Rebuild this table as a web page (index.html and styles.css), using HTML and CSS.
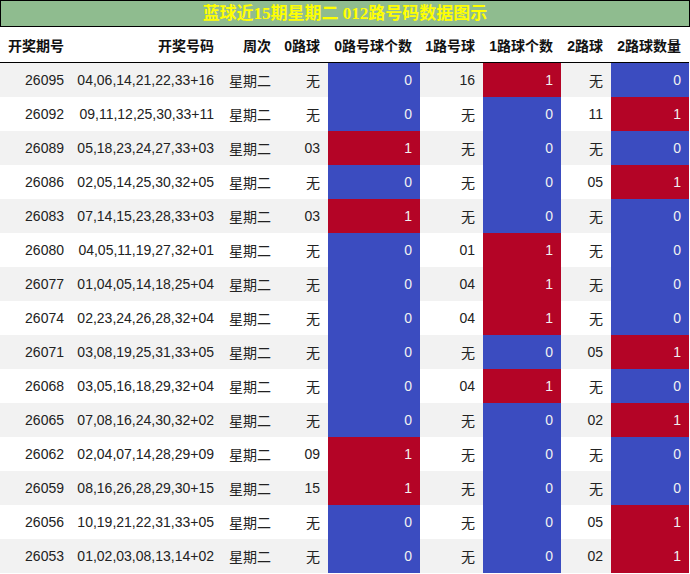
FILE: index.html
```html
<!DOCTYPE html>
<html lang="zh">
<head>
<meta charset="utf-8">
<title>蓝球近15期星期二 012路号码数据图示</title>
<link rel="stylesheet" href="styles.css">
</head>
<body>
<div class="title">蓝球近15期星期二 012路号码数据图示</div>
<table class="grid">
<colgroup>
<col class="c1"><col class="c2"><col class="c3"><col class="c4"><col class="c5"><col class="c6"><col class="c7"><col class="c8"><col class="c9">
</colgroup>
<thead>
<tr><th>开奖期号</th><th>开奖号码</th><th>周次</th><th>0路球</th><th>0路号球个数</th><th>1路号球</th><th>1路球个数</th><th>2路球</th><th>2路球数量</th></tr>
</thead>
<tbody>
<tr><td>26095</td><td>04,06,14,21,22,33+16</td><td>星期二</td><td>无</td><td class="lo">0</td><td>16</td><td class="hi">1</td><td>无</td><td class="lo">0</td></tr>
<tr><td>26092</td><td>09,11,12,25,30,33+11</td><td>星期二</td><td>无</td><td class="lo">0</td><td>无</td><td class="lo">0</td><td>11</td><td class="hi">1</td></tr>
<tr><td>26089</td><td>05,18,23,24,27,33+03</td><td>星期二</td><td>03</td><td class="hi">1</td><td>无</td><td class="lo">0</td><td>无</td><td class="lo">0</td></tr>
<tr><td>26086</td><td>02,05,14,25,30,32+05</td><td>星期二</td><td>无</td><td class="lo">0</td><td>无</td><td class="lo">0</td><td>05</td><td class="hi">1</td></tr>
<tr><td>26083</td><td>07,14,15,23,28,33+03</td><td>星期二</td><td>03</td><td class="hi">1</td><td>无</td><td class="lo">0</td><td>无</td><td class="lo">0</td></tr>
<tr><td>26080</td><td>04,05,11,19,27,32+01</td><td>星期二</td><td>无</td><td class="lo">0</td><td>01</td><td class="hi">1</td><td>无</td><td class="lo">0</td></tr>
<tr><td>26077</td><td>01,04,05,14,18,25+04</td><td>星期二</td><td>无</td><td class="lo">0</td><td>04</td><td class="hi">1</td><td>无</td><td class="lo">0</td></tr>
<tr><td>26074</td><td>02,23,24,26,28,32+04</td><td>星期二</td><td>无</td><td class="lo">0</td><td>04</td><td class="hi">1</td><td>无</td><td class="lo">0</td></tr>
<tr><td>26071</td><td>03,08,19,25,31,33+05</td><td>星期二</td><td>无</td><td class="lo">0</td><td>无</td><td class="lo">0</td><td>05</td><td class="hi">1</td></tr>
<tr><td>26068</td><td>03,05,16,18,29,32+04</td><td>星期二</td><td>无</td><td class="lo">0</td><td>04</td><td class="hi">1</td><td>无</td><td class="lo">0</td></tr>
<tr><td>26065</td><td>07,08,16,24,30,32+02</td><td>星期二</td><td>无</td><td class="lo">0</td><td>无</td><td class="lo">0</td><td>02</td><td class="hi">1</td></tr>
<tr><td>26062</td><td>02,04,07,14,28,29+09</td><td>星期二</td><td>09</td><td class="hi">1</td><td>无</td><td class="lo">0</td><td>无</td><td class="lo">0</td></tr>
<tr><td>26059</td><td>08,16,26,28,29,30+15</td><td>星期二</td><td>15</td><td class="hi">1</td><td>无</td><td class="lo">0</td><td>无</td><td class="lo">0</td></tr>
<tr><td>26056</td><td>10,19,21,22,31,33+05</td><td>星期二</td><td>无</td><td class="lo">0</td><td>无</td><td class="lo">0</td><td>05</td><td class="hi">1</td></tr>
<tr><td>26053</td><td>01,02,03,08,13,14+02</td><td>星期二</td><td>无</td><td class="lo">0</td><td>无</td><td class="lo">0</td><td>02</td><td class="hi">1</td></tr>
</tbody>
</table>
</body>
</html>
```
FILE: styles.css
```css
html, body {
  margin: 0;
  padding: 0;
  background: #ffffff;
}
body {
  font-family: "Liberation Sans", Arial, "Noto Sans CJK SC", sans-serif;
  font-size: 14px;
  color: #222222;
}
.title {
  box-sizing: border-box;
  width: 690px;
  height: 27px;
  border: 1px solid #000000;
  background: #8fbc8f;
  color: #ffff00;
  font-family: "Liberation Serif", "Noto Sans CJK SC", serif;
  font-weight: bold;
  font-size: 17px;
  line-height: 25px;
  text-align: center;
}
.grid {
  width: 689px;
  table-layout: fixed;
  border-collapse: collapse;
  border-spacing: 0;
}
.c1 { width: 72px; }
.c2 { width: 150px; }
.c3 { width: 57px; }
.c4 { width: 49px; }
.c5 { width: 92px; }
.c6 { width: 63px; }
.c7 { width: 78px; }
.c8 { width: 50px; }
.c9 { width: 78px; }
.grid th {
  height: 35px;
  padding: 0 8px 0 0;
  text-align: right;
  font-weight: bold;
  color: #111111;
  border-bottom: 1px solid #000000;
  white-space: nowrap;
}
.grid td {
  height: 34px;
  padding: 0 8px 0 0;
  text-align: right;
  white-space: nowrap;
}
.grid tbody tr:nth-child(odd) {
  background: #f2f2f2;
}
.grid td.lo {
  background: #3b4cc0;
  color: #f1f1f1;
}
.grid td.hi {
  background: #b40426;
  color: #f1f1f1;
}
```
